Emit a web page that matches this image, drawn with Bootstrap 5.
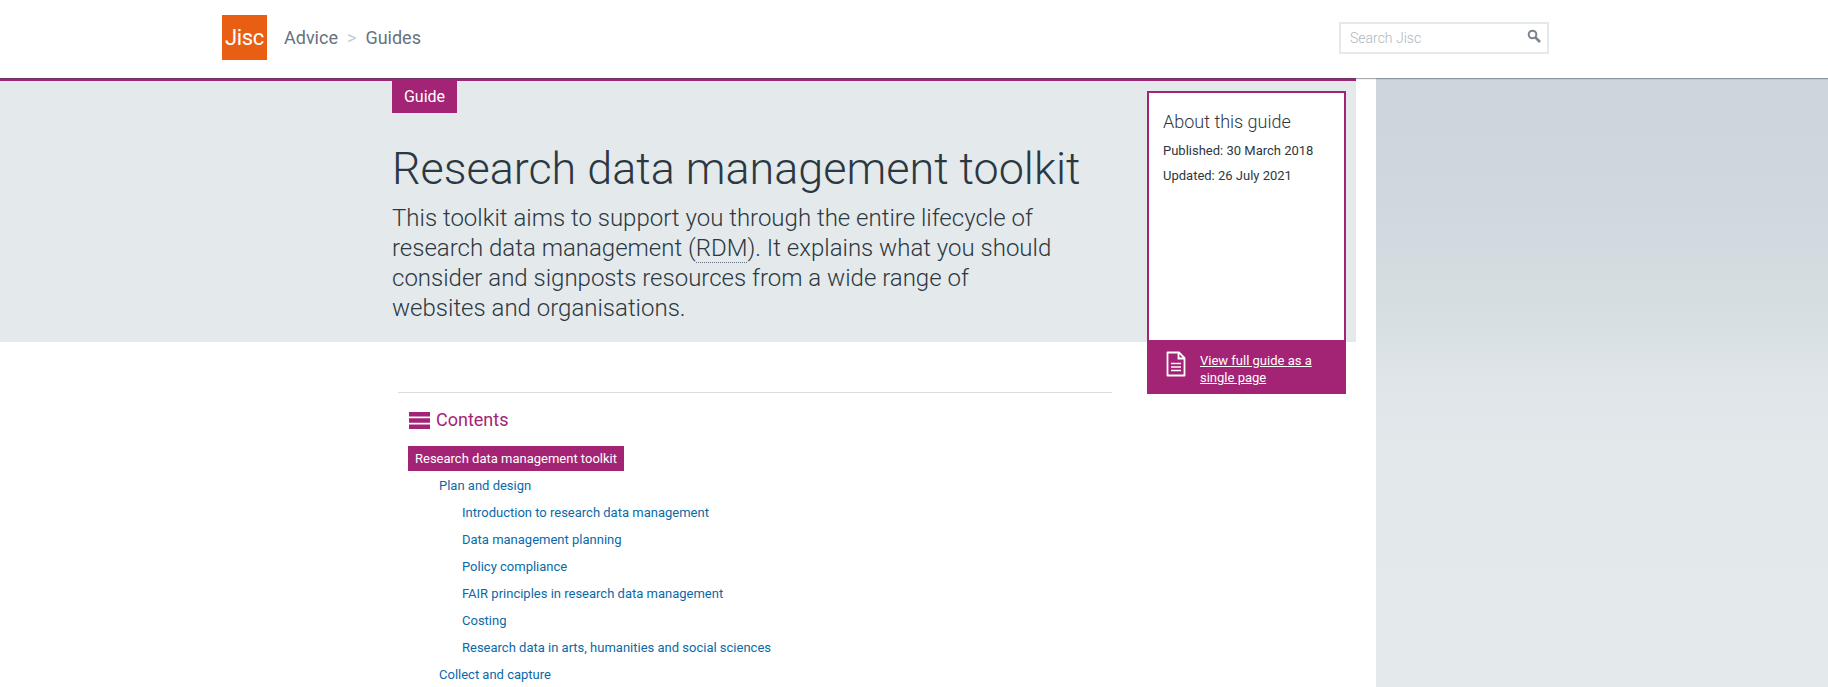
<!DOCTYPE html>
<html lang="en">
<head>
<meta charset="utf-8">
<title>Research data management toolkit</title>
<link href="https://cdn.jsdelivr.net/npm/bootstrap@5.3.0/dist/css/bootstrap.min.css" rel="stylesheet">
<style>
html,body{height:687px;overflow:hidden}
body{font-family:Roboto,"Liberation Sans",sans-serif;color:#2c3841;background:#fff}
.site-head{height:78px;background:#fff;padding-left:222px;position:relative;z-index:2;box-shadow:0 1px 1px rgba(60,70,80,.45)}
.jisc-logo{width:45px;height:45px;background:#e85e13;color:#fff;font-size:22px;font-weight:400;letter-spacing:-.3px;margin-top:15px}
.crumbs{font-size:18px;color:#66727f;margin-left:17px;margin-top:16px}
.crumbs .sep{color:#c4ccd2;margin:0 9px}
.search-box{width:210px;height:32px;border:2px solid #e4e9ec;margin-left:auto;margin-right:279px;margin-top:22px;padding:1px 9px 0;font-size:14px;font-weight:300;color:#b0b7bd}
.search-box svg{margin-right:-3px;margin-top:-5px}
.page-wrap{height:609px}
.main-col{width:1356px;position:relative}
.side-col{margin-left:20px;flex:1;background:linear-gradient(180deg,#cdd5dd 0,#cfd8dd 20%,#d6dee2 38%,#dfe5e9 50%,#e3e8eb 62%,#e4e9ec 100%)}
.hero{height:264px;background:#e4e9ec;border-top:3px solid #a32475;padding-left:392px}
.guide-tag{background:#a32475;color:#fff;width:65px;height:32px;font-size:16px;line-height:32px;text-align:center}
.hero-title{font-size:44.9px;font-weight:300;line-height:54px;margin:29px 0 0;color:#2c3841}
.hero-lead{font-size:24px;font-weight:300;line-height:30px;width:665px;margin:7px 0 0;color:#2c3841}
.hero-lead abbr{text-decoration:none;border-bottom:1px dotted #66727f;cursor:help}
.about-panel{position:absolute;left:1147px;top:13px;width:199px;height:303px}
.about-body{height:249px;border:2px solid #a32475;border-bottom:0;background:#fff;padding:17px 14px}
.about-title{font-size:18px;font-weight:300;line-height:24px;margin:0 0 8px}
.about-body p{font-size:13px;line-height:17px;margin:0 0 8px}
.about-foot{height:54px;background:#a32475;color:#fff;padding:12px 16px 0 19px;gap:14px}
.about-foot svg{margin-top:-1px}
.about-foot a{color:#fff;font-size:13px;line-height:17px}
.toc-area{margin-left:398px;width:714px;margin-top:50px;border-top:1px solid #d8dde1;padding:0 0 0 10px}
.toc-head{color:#a32475;font-size:18px;line-height:24px;gap:6px;margin-top:15px;margin-bottom:13px;padding-left:1px}
.toc-list,.toc-list ul{list-style:none;margin:0}
.toc-list{font-size:13px;line-height:27px;padding:0}
.toc-list a{color:#0a6aa8;text-decoration:none}
.toc-current{display:inline-block;background:#a32475;color:#fff;padding:0 7px;line-height:25px}
.toc-list .toc-lv2{padding-left:31px}
.toc-list .toc-lv3{padding-left:23px}
</style>
</head>
<body>
<header class="site-head d-flex align-items-start">
  <div class="jisc-logo d-flex align-items-center justify-content-center">Jisc</div>
  <div class="crumbs d-flex align-items-center py-2"><span>Advice</span><span class="sep">&gt;</span><span>Guides</span></div>
  <div class="search-box d-flex align-items-center justify-content-between">
    <span>Search Jisc</span>
    <svg width="14" height="14" viewBox="0 0 14 14" aria-hidden="true"><circle cx="5.5" cy="5.5" r="3.8" fill="none" stroke="#7b858e" stroke-width="2"/><path d="M8.5 8.5 13 13" stroke="#7b858e" stroke-width="2.6"/></svg>
  </div>
</header>
<div class="page-wrap d-flex">
  <main class="main-col">
    <section class="hero">
      <div class="guide-tag">Guide</div>
      <h1 class="hero-title">Research data management toolkit</h1>
      <p class="hero-lead">This toolkit aims to support you through the entire lifecycle of research data management (<abbr>RDM</abbr>). It explains what you should consider and signposts resources from a wide range of websites and organisations.</p>
    </section>
    <aside class="about-panel">
      <div class="about-body">
        <h2 class="about-title">About this guide</h2>
        <p>Published: 30 March 2018</p>
        <p>Updated: 26 July 2021</p>
      </div>
      <div class="about-foot d-flex">
        <svg class="flex-shrink-0" width="20" height="26" viewBox="0 0 20 26" aria-hidden="true"><path d="M1.5 1.5H13L18.500 7V24.500H1.500Z" fill="none" stroke="#fff" stroke-width="1.800" stroke-linejoin="round"/><path d="M12.500 1.500V7.500H18.500" fill="none" stroke="#fff" stroke-width="1.800"/><path d="M5 12.500H15M5 16H15M5 19.500H15" stroke="#fff" stroke-width="1.600"/></svg>
        <a href="#">View full guide as a single page</a>
      </div>
    </aside>
    <nav class="toc-area">
      <div class="toc-head d-flex align-items-center">
        <svg width="21" height="17" viewBox="0 0 21 17" aria-hidden="true"><path d="M0 0h21v4.500H0zM0 6.300h21v4.500H0zM0 12.500h21v4.500H0z" fill="#a32475"/></svg>
        <span>Contents</span>
      </div>
      <ul class="toc-list">
        <li><span class="toc-current">Research data management toolkit</span>
          <ul class="toc-lv2">
            <li><a href="#">Plan and design</a>
              <ul class="toc-lv3">
                <li><a href="#">Introduction to research data management</a></li>
                <li><a href="#">Data management planning</a></li>
                <li><a href="#">Policy compliance</a></li>
                <li><a href="#">FAIR principles in research data management</a></li>
                <li><a href="#">Costing</a></li>
                <li><a href="#">Research data in arts, humanities and social sciences</a></li>
              </ul>
            </li>
            <li><a href="#">Collect and capture</a></li>
          </ul>
        </li>
      </ul>
    </nav>
  </main>
  <div class="side-col"></div>
</div>
<script src="https://cdn.jsdelivr.net/npm/bootstrap@5.3.0/dist/js/bootstrap.bundle.min.js"></script>
</body>
</html>
